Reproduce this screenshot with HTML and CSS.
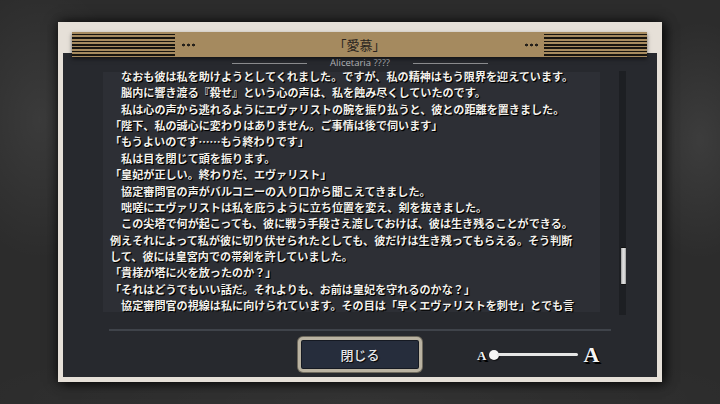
FILE: index.html
```html
<!DOCTYPE html>
<html lang="ja">
<head>
<meta charset="utf-8">
<link rel="stylesheet" href="styles.css">
</head>
<body>
<div class="stage">
  <div class="frame">
    <div class="band">
      <div class="stripes"></div>
      <div class="dots"></div>
      <div class="title">「愛慕」</div>
      <div class="dots"></div>
      <div class="stripes"></div>
    </div>
    <div class="panel">
      <div class="subtitle">
        <span class="rule"></span>
        <span class="name">Alicetaria ????</span>
        <span class="rule"></span>
      </div>
      <div class="scrollrow">
        <div class="textbox">
          <div class="text">
            <p>　なおも彼は私を助けようとしてくれました。ですが、私の精神はもう限界を迎えています。</p>
            <p>　脳内に響き渡る『殺せ』という心の声は、私を蝕み尽くしていたのです。</p>
            <p>　私は心の声から逃れるようにエヴァリストの腕を振り払うと、彼との距離を置きました。</p>
            <p>「陛下、私の誠心に変わりはありません。ご事情は後で伺います」</p>
            <p>「もうよいのです……もう終わりです」</p>
            <p>　私は目を閉じて頭を振ります。</p>
            <p>「皇妃が正しい。終わりだ、エヴァリスト」</p>
            <p>　協定審問官の声がバルコニーの入り口から聞こえてきました。</p>
            <p>　咄嗟にエヴァリストは私を庇うように立ち位置を変え、剣を抜きました。</p>
            <p>　この尖塔で何が起こっても、彼に戦う手段さえ渡しておけば、彼は生き残ることができる。</p>
            <p>例えそれによって私が彼に切り伏せられたとしても、彼だけは生き残ってもらえる。そう判断</p>
            <p>して、彼には皇宮内での帯剣を許していました。</p>
            <p>「貴様が塔に火を放ったのか？」</p>
            <p>「それはどうでもいい話だ。それよりも、お前は皇妃を守れるのかな？」</p>
            <p>　協定審問官の視線は私に向けられています。その目は「早くエヴァリストを刺せ」とでも言</p>
          </div>
        </div>
        <div class="track"><div class="thumb"></div></div>
      </div>
      <div class="separator"></div>
      <div class="controls">
        <div></div>
        <button class="close">閉じる</button>
        <div class="slider">
          <span class="a-small">A</span>
          <span class="slide">
            <span class="knob"></span>
            <span class="bar"></span>
          </span>
          <span class="a-big">A</span>
        </div>
      </div>
    </div>
  </div>
</div>
</body>
</html>
```

FILE: styles.css
```css
* { box-sizing: border-box; }
html, body {
  margin: 0;
  padding: 0;
  width: 720px;
  height: 404px;
  overflow: hidden;
}
body {
  background:
    radial-gradient(ellipse 90px 140px at 40px 120px, rgba(255,255,255,0.07), transparent),
    radial-gradient(ellipse 70px 120px at 700px 140px, rgba(255,255,255,0.08), transparent),
    radial-gradient(ellipse 400px 60px at 360px 400px, rgba(255,255,255,0.04), transparent),
    #2c2c2c;
  font-family: "Noto Sans CJK JP", "Noto Sans", sans-serif;
}
.stage {
  width: 720px;
  height: 404px;
  display: flex;
  align-items: center;
  justify-content: center;
}
.frame {
  width: 604px;
  height: 360px;
  background: #e6e0d8;
  padding: 10px 5px 5px 5px;
  display: flex;
  flex-direction: column;
  box-shadow: 0 0 12px rgba(0,0,0,0.7), 4px 2px 10px rgba(0,0,0,0.5);
}
.band {
  position: relative;
  z-index: 1;
  height: 25px;
  margin: 0 10px 0 9px;
  background: #a58a5f;
  display: flex;
  align-items: center;
  box-shadow: 0 2px 4px rgba(0,0,0,0.55);
}
.stripes {
  width: 103px;
  height: 25px;
  background: repeating-linear-gradient(to bottom, #a58a5f 0 1.8px, #17140f 1.8px 3.4px);
}
.dots {
  width: 14px;
  height: 4px;
  margin: 0 6px;
  background: radial-gradient(circle, #25211b 1.2px, transparent 1.7px) 0 0 / 5px 4px repeat-x;
}
.title {
  flex: 1;
  text-align: center;
  font-size: 13px;
  color: #2a251e;
  line-height: 25px;
}
.panel {
  flex: 1;
  margin-top: -4px;
  background: #27292e;
  padding: 4px 0 5px 40px;
  display: flex;
  flex-direction: column;
}
.subtitle {
  height: 12px;
  margin-left: -40px;
  display: flex;
  align-items: center;
  justify-content: center;
  gap: 23px;
}
.rule {
  width: 75px;
  height: 1px;
  background: #8c8d90;
}
.name {
  font-family: "Open Sans", "Noto Sans", sans-serif;
  font-size: 9.5px;
  color: #b5b6b9;
  line-height: 12px;
}
.scrollrow {
  margin-top: 2px;
  height: 244px;
  display: flex;
  gap: 19px;
}
.textbox {
  margin-top: 1px;
  width: 497px;
  height: 240px;
  background: #2d2f35;
  padding-left: 7px;
}
.text {
  margin-top: -4px;
}
.text p {
  margin: 0;
  font-size: 11.1px;
  line-height: 16.36px;
  font-weight: 700;
  color: #f3f1ec;
  white-space: nowrap;
  text-shadow: 1px 1px 1px #000, 1px 1px 0 #000;
}
.track {
  width: 7px;
  height: 244px;
  background: #1d1f23;
  padding: 176px 1px 0 2px;
}
.thumb {
  width: 5px;
  height: 38px;
  background: linear-gradient(to right, #9a9a9a, #e2e2e2 40%, #cfcfcf 80%, #8a8a8a);
  border-top: 1px solid #111;
  border-bottom: 1px solid #111;
}
.separator {
  margin: 14px 46px 0 6px;
  height: 2px;
  background: #3f434a;
}
.controls {
  margin-top: 6px;
  margin-left: -40px;
  height: 35px;
  display: grid;
  grid-template-columns: 1fr 124px 1fr;
  align-items: center;
}
.close {
  width: 124px;
  height: 35px;
  margin: 0;
  padding: 0;
  border: 3px solid #bab3a2;
  border-radius: 5px;
  background: #262d3c;
  box-shadow: inset 0 0 0 1px #151922, 0 0 0 1px #6f6a5e;
  color: #e9e9e9;
  font-family: "Noto Sans CJK JP", sans-serif;
  font-size: 13px;
  font-weight: 500;
  text-shadow: 1px 1px 1px #000;
}
.slider {
  margin-left: 55px;
  display: flex;
  align-items: center;
  height: 35px;
}
.a-small, .a-big {
  font-family: "Liberation Serif", "DejaVu Serif", serif;
  font-weight: 700;
  color: #f4f4f4;
  text-shadow: 1px 1px 1px #000, 2px 2px 0 #000;
}
.a-small {
  font-size: 13px;
  margin-right: 3px;
  margin-top: 2px;
}
.a-big {
  font-size: 22px;
  margin-left: 5px;
  margin-top: 1px;
}
.slide {
  display: flex;
  align-items: center;
  width: 89px;
}
.knob {
  width: 10px;
  height: 10px;
  border-radius: 50%;
  background: #f5f5f5;
  flex: none;
  box-shadow: 1px 1px 1px rgba(0,0,0,0.6);
}
.bar {
  flex: 1;
  height: 3px;
  margin-left: -2px;
  background: #e6e6e6;
  border-radius: 2px;
}
```
